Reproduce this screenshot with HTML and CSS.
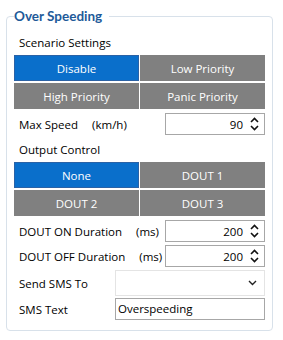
FILE: index.html
```html
<!DOCTYPE html>
<html lang="en">
<head>
    <meta charset="UTF-8">
    <title>Over Speeding</title>
    <link rel="stylesheet" href="styles.css">
</head>
<body>
    <fieldset class="group">
      <legend>Over Speeding</legend>

      <div class="label-row">Scenario Settings</div>
      <div class="toggle-grid">
        <button class="toggle active">Disable</button>
        <button class="toggle">Low Priority</button>
        <button class="toggle">High Priority</button>
        <button class="toggle">Panic Priority</button>
      </div>

      <div class="field-row speed-row">
        <span class="field-label">Max Speed</span>
        <span class="unit">(km/h)</span>
        <div class="spin">
          <span class="spin-value">90</span>
          <svg class="spin-arrows" width="9" height="14" viewBox="0 0 9 14">
            <path d="M1 5 L4.5 1.5 L8 5" fill="none" stroke="#111" stroke-width="1.6"/>
            <path d="M1 9 L4.5 12.5 L8 9" fill="none" stroke="#111" stroke-width="1.6"/>
          </svg>
        </div>
      </div>

      <div class="label-row output-label">Output Control</div>
      <div class="toggle-grid">
        <button class="toggle active">None</button>
        <button class="toggle">DOUT 1</button>
        <button class="toggle">DOUT 2</button>
        <button class="toggle">DOUT 3</button>
      </div>

      <div class="field-row on-row">
        <span class="field-label">DOUT ON Duration</span>
        <span class="unit">(ms)</span>
        <div class="spin">
          <span class="spin-value">200</span>
          <svg class="spin-arrows" width="9" height="14" viewBox="0 0 9 14">
            <path d="M1 5 L4.5 1.5 L8 5" fill="none" stroke="#111" stroke-width="1.6"/>
            <path d="M1 9 L4.5 12.5 L8 9" fill="none" stroke="#111" stroke-width="1.6"/>
          </svg>
        </div>
      </div>

      <div class="field-row off-row">
        <span class="field-label">DOUT OFF Duration</span>
        <span class="unit">(ms)</span>
        <div class="spin">
          <span class="spin-value">200</span>
          <svg class="spin-arrows" width="9" height="14" viewBox="0 0 9 14">
            <path d="M1 5 L4.5 1.5 L8 5" fill="none" stroke="#111" stroke-width="1.6"/>
            <path d="M1 9 L4.5 12.5 L8 9" fill="none" stroke="#111" stroke-width="1.6"/>
          </svg>
        </div>
      </div>

      <div class="field-row sms-to-row">
        <span class="field-label">Send SMS To</span>
        <div class="combo">
          <svg class="combo-arrow" width="9" height="6" viewBox="0 0 9 6">
            <path d="M1 1 L4.5 4.5 L8 1" fill="none" stroke="#222" stroke-width="1.4"/>
          </svg>
        </div>
      </div>

      <div class="field-row sms-text-row">
        <span class="field-label">SMS Text</span>
        <div class="text-box">Overspeeding</div>
      </div>
    </fieldset>
</body>
</html>
```

FILE: styles.css
```css
html, body {
  margin: 0;
  padding: 0;
  background: #fff;
}
body {
  font-family: "Open Sans", "Noto Sans", sans-serif;
  font-size: 11.5px;
  color: #000;
}
.group {
  margin: 8px 10px 0 6px;
  padding: 0 7px 8px 7px;
  border: 1px solid #d8e1ea;
  border-radius: 4px;
  min-width: 0;
  height: 323px;
  box-sizing: border-box;
}
.group legend {
  padding: 0 7px 0 0;
  font-family: Lato, "Open Sans", sans-serif;
  font-size: 13.5px;
  font-weight: bold;
  line-height: 16px;
  color: #1e5a99;
}
.label-row {
  height: 22px;
  line-height: 22px;
  padding-left: 5px;
  margin-top: 8px;
}
.output-label {
  margin-top: 4px;
}
.toggle-grid {
  display: grid;
  grid-template-columns: 125px 125px;
  grid-auto-rows: 26px;
  gap: 2px 1px;
  margin-top: 1px;
}
.toggle {
  margin: 0;
  padding: 0;
  border: 1px solid #808080;
  background: #808080;
  color: #fff;
  font-family: inherit;
  font-size: 11.5px;
}
.toggle.active {
  background: #0a6fcb;
  border-color: #2a62a6;
}
.field-row {
  display: flex;
  align-items: center;
  height: 22px;
  padding-left: 5px;
}
.speed-row {
  margin-top: 4px;
}
.on-row {
  margin-top: 4px;
}
.off-row {
  margin-top: 3px;
}
.sms-to-row {
  margin-top: 3px;
  height: 26px;
}
.sms-text-row {
  margin-top: 2px;
}
.unit {
  margin-left: 14px;
}
.spin {
  margin-left: auto;
  width: 100px;
  height: 22px;
  box-sizing: border-box;
  border: 1px solid #a7a7a7;
  display: flex;
  align-items: center;
  justify-content: flex-end;
  padding-right: 5px;
}
.spin-value {
  margin-right: 7px;
}
.combo {
  margin-left: auto;
  width: 150px;
  height: 26px;
  box-sizing: border-box;
  border: 1px solid #e4e4e4;
  display: flex;
  align-items: center;
  justify-content: flex-end;
  padding-right: 7px;
}
.text-box {
  margin-left: auto;
  width: 150px;
  height: 22px;
  box-sizing: border-box;
  border: 1px solid #a7a7a7;
  padding-left: 2px;
  line-height: 20px;
}
```
